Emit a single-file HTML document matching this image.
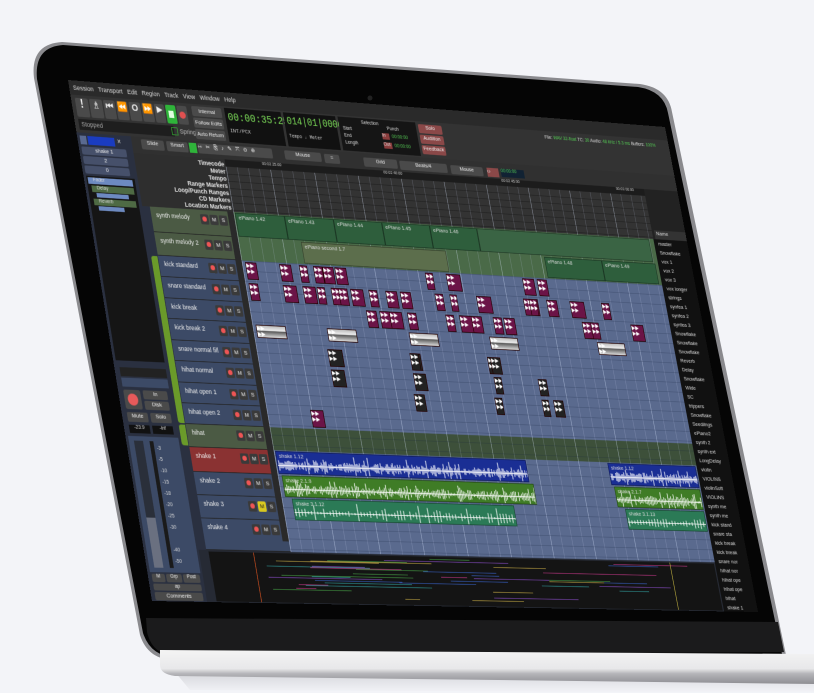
<!DOCTYPE html>
<html><head><meta charset="utf-8">
<style>
html,body{margin:0;padding:0;width:814px;height:693px;overflow:hidden;background:#f3f4f8;font-family:"Liberation Sans",sans-serif;}
#ui{position:absolute;left:0;top:0;width:1000px;height:700px;transform-origin:0 0;background:#2c2c2c;overflow:hidden;font-size:9px;color:#ddd;}
#ui div{position:absolute;box-sizing:border-box;}
.btn{background:#4a4a4a;border-radius:2px;color:#eee;text-align:center;}
.lbl{font-weight:bold;text-align:right;width:140px;left:88px;color:#e6e6e6;font-size:9px;}
.hd{left:97px;width:133px;border-bottom:1px solid #222;}
.nm{left:8px;top:6px;color:#eee;font-size:9px;white-space:nowrap;}
.reg{overflow:hidden;border:1px solid rgba(0,0,0,.4);}
.reg span{position:absolute;left:4px;top:1px;font-size:8px;color:#ddd;white-space:nowrap}
.hit{background:#6b1447;border:1px solid #200;color:#fff;font-size:8px;line-height:8px;overflow:hidden;}
.li{left:944px;width:56px;height:14px;background:#111;border-bottom:1px solid #333;font-size:8px;color:#ddd;padding-left:3px;white-space:nowrap;overflow:hidden;}
</style></head><body>
<svg width="814" height="693" style="position:absolute;left:0;top:0">
<defs>
<linearGradient id="base" x1="0" y1="0" x2="0" y2="1">
<stop offset="0" stop-color="#f4f4f4"/><stop offset="0.55" stop-color="#e8e8ea"/><stop offset="0.7" stop-color="#b4b4b8"/><stop offset="1" stop-color="#8e8e93"/></linearGradient>
<linearGradient id="sh" x1="0" y1="0" x2="0" y2="1"><stop offset="0" stop-color="#c8c9ce"/><stop offset="1" stop-color="#f3f4f8"/></linearGradient>
</defs>
<path d="M175 672 L814 680 L814 693 L190 690 Z" fill="url(#sh)" opacity="0.7"/>
<path d="M62 42 L640 84 Q668 88 672 112 L786 655 L175 660 Q148 660 140 635 L34 78 Q30 44 62 42 Z" fill="#8a8a8e"/>
<path d="M63 45 L638 87 Q664 91 668 113 L782 654 L176 657 Q151 657 143 633 L37 79 Q34 47 63 45 Z" fill="#050505"/>
<path d="M146 618 L778 622 L784 652 L176 656 Q152 655 147 632 Z" fill="#1b1b1c"/>
<circle cx="370" cy="98" r="2.5" fill="#222"/>
<path d="M160 650 L814 654 L814 684 L175 676 Q160 674 160 665 Z" fill="url(#base)"/>
</svg>

<div id="ui">
<div style="left:0;top:0;width:1000px;height:20px;background:#2a2a2a;padding:5px 0 0 6px;font-size:9px;color:#ddd;word-spacing:5px">Session Transport Edit Region Track View Window Help</div>
<div style="left:0;top:20px;width:1000px;height:52px;background:#333"></div>
<div class="btn" style="left:6px;top:24px;width:20px;height:26px;font-size:16px;font-weight:bold">!</div>
<div class="btn" style="left:28px;top:24px;width:20px;height:26px;font-size:14px">♗</div>
<div class="btn" style="left:50px;top:24px;width:18px;height:26px;font-size:13px;font-weight:bold">⏮</div>
<div class="btn" style="left:70px;top:24px;width:18px;height:26px;font-size:13px;font-weight:bold">⏪</div>
<div class="btn" style="left:90px;top:24px;width:18px;height:26px;font-size:13px;font-weight:bold">O</div>
<div class="btn" style="left:110px;top:24px;width:18px;height:26px;font-size:13px;font-weight:bold">⏩</div>
<div class="btn" style="left:130px;top:24px;width:16px;height:26px;font-size:12px">▶</div>
<div style="left:148px;top:24px;width:16px;height:26px;background:#2fb43a;border-radius:2px"><div style="left:4px;top:8px;width:8px;height:10px;background:#dfffe0"></div></div>
<div class="btn" style="left:166px;top:24px;width:16px;height:26px"><div style="left:3px;top:8px;width:10px;height:10px;border-radius:50%;background:#e05050"></div></div>
<div style="left:6px;top:53px;width:150px;height:15px;background:#1e1e1e;color:#aaa;padding:2px 4px">Stopped</div>
<div style="left:152px;top:55px;width:10px;height:11px;border:1px solid #3a3"></div>
<div style="left:165px;top:55px;width:40px;color:#bbb">Spring</div>
<div class="btn" style="left:190px;top:23px;width:48px;height:14px;font-size:8px;padding-top:2px">Internal</div>
<div class="btn" style="left:190px;top:39px;width:48px;height:14px;font-size:8px;padding-top:2px">Follow Edits</div>
<div class="btn" style="left:190px;top:55px;width:48px;height:14px;font-size:8px;padding-top:2px">Auto Return</div>
<div style="left:243px;top:22px;width:92px;height:48px;background:#111;color:#7ee05a;font-size:15px;padding:5px 4px;font-family:'Liberation Mono',monospace">00:00:35:25<div style="left:4px;top:28px;font-size:8px;color:#ccc">INT/PCX</div></div>
<div style="left:339px;top:22px;width:86px;height:48px;background:#111;color:#7ee05a;font-size:14px;padding:5px 4px;font-family:'Liberation Mono',monospace">014|01|0000<div style="left:4px;top:30px;font-size:7px;color:#ccc">Tempo ♩ Meter</div></div>
<div style="left:429px;top:22px;width:130px;height:48px;background:#151515;font-size:7px;color:#ddd">
<div style="left:38px;top:3px">Selection</div><div style="left:6px;top:13px">Start</div><div style="left:6px;top:23px">End</div><div style="left:6px;top:33px">Length</div>
<div style="left:80px;top:9px">Punch</div><div style="left:70px;top:19px;width:12px;height:9px;background:#8a3c3c">In</div><div style="left:70px;top:32px;width:14px;height:9px;background:#8a3c3c">Out</div>
<div style="left:86px;top:20px;color:#5c5">00:00:00</div><div style="left:88px;top:33px;color:#5c5">00:00:00</div></div>
<div class="btn" style="left:563px;top:24px;width:40px;height:13px;background:#8a4848;font-size:8px">Solo</div>
<div class="btn" style="left:563px;top:39px;width:40px;height:13px;background:#8a4848;font-size:8px">Audition</div>
<div class="btn" style="left:563px;top:54px;width:40px;height:13px;background:#8a4848;font-size:8px">Feedback</div>
<div style="left:780px;top:26px;width:220px;font-size:7px;color:#ddd;white-space:nowrap">File: <span style="color:#5c5">WAV 32-float</span> TC: <span style="color:#5c5">30</span> Audio: <span style="color:#5c5">48 kHz / 5.3 ms</span> Buffers: <span style="color:#5c5">100%</span></div>
<div style="left:85px;top:72px;width:915px;height:23px;background:#303030"></div>
<div class="btn" style="left:100px;top:75px;width:36px;height:14px;font-size:8px">Slide</div>
<div class="btn" style="left:140px;top:75px;width:34px;height:14px;font-size:8px">Smart</div>
<div style="left:176px;top:75px;width:12px;height:14px;background:#2fb43a"></div>
<div class="btn" style="left:190px;top:75px;width:120px;height:14px;font-size:8px;text-align:left;letter-spacing:6px">⇿✂⎘♪✎⤧⊖⊕</div>
<div class="btn" style="left:330px;top:76px;width:60px;height:13px;font-size:8px">Mouse</div>
<div class="btn" style="left:395px;top:77px;width:25px;height:13px;font-size:8px">=</div>
<div class="btn" style="left:460px;top:78px;width:56px;height:13px;font-size:8px">Grid</div>
<div class="btn" style="left:520px;top:79px;width:80px;height:13px;font-size:8px">Beats/4</div>
<div class="btn" style="left:606px;top:80px;width:55px;height:13px;font-size:8px">Mouse</div>
<div style="left:668px;top:80px;width:20px;height:13px;background:#8a4848;font-size:9px">‹›</div>
<div style="left:692px;top:80px;width:40px;height:12px;background:#123;color:#5c5;font-size:7px">00:00:00</div>
<div style="left:0;top:72px;width:85px;height:628px;background:#2a3040"></div>
<div style="left:4px;top:76px;width:10px;height:12px;background:#5a6a90"></div>
<div style="left:16px;top:76px;width:42px;height:12px;background:#1a3cc0"></div>
<div style="left:62px;top:76px;width:10px;height:12px;color:#ddd;font-size:10px">×</div>
<div class="btn" style="left:4px;top:91px;width:70px;height:11px;font-size:8px;background:#46506a">shake 1</div>
<div class="btn" style="left:4px;top:104px;width:70px;height:11px;font-size:8px;background:#46506a">2</div>
<div class="btn" style="left:4px;top:117px;width:70px;height:11px;font-size:8px;background:#46506a">0</div>
<div style="left:4px;top:131px;width:76px;height:250px;background:#151515"></div>
<div style="left:6px;top:133px;width:70px;height:9px;background:#6d8ac0;font-size:7px;padding-left:8px">Fader</div>
<div style="left:10px;top:144px;width:66px;height:9px;background:#4e6a44;font-size:7px;padding-left:8px">Delay</div>
<div style="left:16px;top:154px;width:50px;height:6px;background:#6d8ac0"></div>
<div style="left:10px;top:162px;width:66px;height:9px;background:#4e6a44;font-size:7px;padding-left:8px">Reverb</div>
<div style="left:16px;top:172px;width:40px;height:6px;background:#6d8ac0"></div>
<div style="left:8px;top:390px;width:72px;height:12px;background:#222"></div>
<div style="left:8px;top:404px;width:72px;height:12px;background:#3c4a66"></div>
<div style="left:8px;top:420px;width:26px;height:26px;background:#4a4a4a;border-radius:3px"><div style="left:5px;top:5px;width:16px;height:16px;border-radius:50%;background:#e85a5a"></div></div>
<div class="btn" style="left:38px;top:420px;width:38px;height:12px;font-size:8px">In</div>
<div class="btn" style="left:38px;top:434px;width:38px;height:12px;font-size:8px">Disk</div>
<div class="btn" style="left:8px;top:450px;width:32px;height:13px;font-size:8px">Mute</div>
<div class="btn" style="left:44px;top:450px;width:32px;height:13px;font-size:8px">Solo</div>
<div style="left:8px;top:467px;width:32px;height:11px;background:#111;font-size:7px;text-align:center">-23.9</div>
<div style="left:44px;top:467px;width:32px;height:11px;background:#111;font-size:7px;text-align:center">-inf</div>
<div style="left:4px;top:482px;width:78px;height:180px;background:#3c4a66"></div>
<div style="left:12px;top:488px;width:14px;height:168px;background:#2a2f3a"></div>
<div style="left:12px;top:590px;width:14px;height:66px;background:#6a7080"></div>
<div style="left:36px;top:488px;width:6px;height:168px;background:#1a1a1a"></div>
<div style="left:46px;top:490px;width:28px;height:165px;font-size:7px;line-height:15px;color:#ddd">-3<br>-5<br>-10<br>-15<br>-18<br>-20<br>-25<br>-30<br><br>-40<br>-50</div>
<div class="btn" style="left:6px;top:664px;width:20px;height:11px;font-size:7px">M</div>
<div class="btn" style="left:28px;top:664px;width:24px;height:11px;font-size:7px">Grp</div>
<div class="btn" style="left:54px;top:664px;width:26px;height:11px;font-size:7px">Post</div>
<div class="btn" style="left:6px;top:677px;width:74px;height:9px;font-size:7px">ap</div>
<div class="btn" style="left:6px;top:688px;width:74px;height:11px;font-size:8px">Comments</div>
<div style="left:85px;top:95px;width:145px;height:73px;background:#2e2e2e"></div>
<div class="lbl" style="top:97px">Timecode</div>
<div class="lbl" style="top:107px">Meter</div>
<div class="lbl" style="top:117px">Tempo</div>
<div class="lbl" style="top:127px">Range Markers</div>
<div class="lbl" style="top:137px">Loop/Punch Ranges</div>
<div class="lbl" style="top:147px">CD Markers</div>
<div class="lbl" style="top:157px">Location Markers</div>
<div style="left:230px;top:95px;width:710px;height:73px;background:#333"></div>
<div style="left:230px;top:95px;width:710px;height:10px;background:#1c1c1c;font-size:6px;color:#ccc"><span style="position:absolute;left:60px">00:02 25:00</span><span style="position:absolute;left:260px">00:02 40:00</span><span style="position:absolute;left:460px">00:02 45:00</span><span style="position:absolute;left:660px">00:03 00:00</span></div>
<div style="left:940px;top:95px;width:60px;height:73px;background:#222"></div>
<div class="li" style="top:155px;background:#333">Name</div>
<div class="hd" style="top:168px;height:35px;background:#4b5a44"><div class="nm">synth melody</div></div>
<div class="hd" style="top:203px;height:32px;background:#4b5a44"><div class="nm">synth melody 2</div></div>
<div class="hd" style="top:235px;height:29px;background:#3c4a66"><div class="nm">kick standard</div></div>
<div class="hd" style="top:264px;height:29px;background:#3c4a66"><div class="nm">snare standard</div></div>
<div class="hd" style="top:293px;height:28px;background:#3c4a66"><div class="nm">kick break</div></div>
<div class="hd" style="top:321px;height:29px;background:#3c4a66"><div class="nm">kick break 2</div></div>
<div class="hd" style="top:350px;height:28px;background:#3c4a66"><div class="nm">snare normal fill</div></div>
<div class="hd" style="top:378px;height:29px;background:#3c4a66"><div class="nm">hihat normal</div></div>
<div class="hd" style="top:407px;height:28px;background:#3c4a66"><div class="nm">hihat open 1</div></div>
<div class="hd" style="top:435px;height:28px;background:#3c4a66"><div class="nm">hihat open 2</div></div>
<div class="hd" style="top:463px;height:31px;background:#4b5a44"><div class="nm">hihat</div></div>
<div class="hd" style="top:494px;height:33px;background:#8a3232"><div class="nm">shake 1</div></div>
<div class="hd" style="top:527px;height:31px;background:#3c4a66"><div class="nm">shake 2</div></div>
<div class="hd" style="top:558px;height:31px;background:#3c4a66"><div class="nm">shake 3</div></div>
<div class="hd" style="top:589px;height:42px;background:#3c4a66"><div class="nm">shake 4</div></div>
<div style="left:85px;top:168px;width:12px;height:463px;background:#2a3040"></div>
<div style="left:86px;top:236px;width:10px;height:226px;background:#6a9a2a;border-radius:4px 0 0 4px"></div>
<div style="left:86px;top:464px;width:10px;height:28px;background:#6a9a2a;border-radius:4px 0 0 4px"></div>
<div style="left:230px;top:168px;width:710px;height:67px;background:#4a6a48"></div>
<div style="left:230px;top:235px;width:710px;height:228px;background:#5a6a8e"></div>
<div style="left:230px;top:463px;width:710px;height:31px;background:#3d503a"></div>
<div style="left:230px;top:494px;width:710px;height:137px;background:#5a6a8e"></div>
<div id="tl" style="left:230px;top:95px;width:710px;height:536px"></div>
<div style="left:940px;top:168px;width:60px;height:532px;background:#111"></div>
<div id="list"></div>
<div style="left:85px;top:631px;width:855px;height:69px;background:#262a34"></div>
<div style="left:100px;top:633px;width:838px;height:66px;background:#141414"></div>
<div id="sum"></div>
<div style="left:170px;top:633px;width:1px;height:66px;background:#d05020"></div>
<div style="left:860px;top:633px;width:1px;height:66px;background:#c0b040"></div>
</div>

<script>
var ui=document.getElementById('ui');
function H(s){ui.insertAdjacentHTML('beforeend',s);}
var seed=7;function rnd(){seed=(seed*9301+49297)%233280;return seed/233280;}
var rows=[[168,35],[203,32],[235,29],[264,29],[293,28],[321,29],[350,28],[378,29],[407,28],[435,28],[463,31],[494,33],[527,31],[558,31],[589,28]];
rows.forEach(function(r,i){var x=175,y=r[0]+6;
H('<div style="left:'+x+'px;top:'+y+'px;width:13px;height:14px;background:#3a3a3a;border-radius:2px"><div style="left:3px;top:3px;width:7px;height:7px;border-radius:50%;background:#e55"></div></div>');
H('<div class="btn" style="left:'+(x+15)+'px;top:'+y+'px;width:13px;height:14px;font-size:8px;line-height:14px;background:'+(i==13?'#d8c820;color:#222':'#3a3a3a')+'">M</div>');
H('<div class="btn" style="left:'+(x+30)+'px;top:'+y+'px;width:13px;height:14px;font-size:8px;line-height:14px;background:#3a3a3a">S</div>');
H('<div style="left:220px;top:'+r[0]+'px;width:10px;height:'+r[1]+'px;background:#2a2a2a"></div>');});
var sm=['ePiano 1.42','ePiano 1.43','ePiano 1.44','ePiano 1.45','ePiano 1.46'];
for(var i=0;i<5;i++){H('<div class="reg" style="left:'+(232+i*80)+'px;top:169px;width:80px;height:33px;background:#2e5e3c"><span>'+sm[i]+'</span></div>');}
H('<div class="reg" style="left:632px;top:169px;width:300px;height:33px;background:#3a6444"></div>');
H('<div class="reg" style="left:332px;top:204px;width:240px;height:30px;background:#5c6e4c"><span>ePiano second 1.7</span></div>');
H('<div class="reg" style="left:740px;top:204px;width:100px;height:30px;background:#2e5e3c"><span>ePiano 1.48</span></div>');
H('<div class="reg" style="left:840px;top:204px;width:95px;height:30px;background:#2e5e3c"><span>ePiano 1.49</span></div>');
var tl='';for(var x=0;x<710;x+=18){tl+='<div style="left:'+x+'px;top:10px;width:1px;height:526px;background:'+(x%72==0?'rgba(220,230,255,.45)':'rgba(200,210,240,.22)')+'"></div>';}
for(var y=140;y<536;y+=14){tl+='<div style="left:0;top:'+y+'px;width:710px;height:1px;background:rgba(20,30,60,.25)"></div>';}
for(var y=20;y<73;y+=10){tl+='<div style="left:0;top:'+y+'px;width:710px;height:1px;background:rgba(0,0,0,.3)"></div>';}
document.getElementById('tl').innerHTML=tl;
var dr=[[235,[5,60,92,115,130,150,300,335,465,490]],[264,[5,60,92,115,138,150,170,200,228,252,310,335,380,460,470,500,540,595]],[293,[190,212,228,258,322,345,365,402,420,555,570,640]],[321,[5,120,255,390,575]],[350,[115,250,250,380,385]],[378,[115,250,385,460]],[407,[245,380,460,480]],[435,[70]]];
dr.forEach(function(d){d[1].forEach(function(x){var w=12+Math.floor(rnd()*14);if(d[0]==321)w=48;
H('<div class="hit" style="left:'+(230+x)+'px;top:'+(d[0]+2)+'px;width:'+w+'px;height:'+(d[0]==321?18:24)+'px;'+(d[0]==321?'background:linear-gradient(#bbb,#eee 40%,#555 45%,#ddd);':'')+(d[0]>=350&&d[0]<435?'background:#222;':'')+'">▶▶<br>▶▶</div>');});});
function wave(l,t,w,h,bg,label,dense){var s='<svg width="'+w+'" height="'+h+'" style="position:absolute;left:0;top:0"><path d="';
for(var x=2;x<w;x+=dense){var a=(rnd()<0.2?0.45:0.2)*h*rnd()+1;s+='M'+x+' '+(h/2+3-a)+'V'+(h/2+3+a);}
s+='M0 '+(h/2+3)+'H'+w+'" stroke="#fff" stroke-width="1.2"/></svg>';
H('<div class="reg" style="left:'+l+'px;top:'+t+'px;width:'+w+'px;height:'+h+'px;background:'+bg+'">'+s+'<span>'+label+'</span></div>');}
wave(232,495,412,31,'#1a2e94','shake 1.12',2);wave(784,495,154,31,'#1a2e94','shake 1.12',2);
wave(236,528,414,29,'#3f7c26','shake 2.1.9',2.5);wave(788,528,150,29,'#3f7c26','shake 2.1.7',2.5);
wave(246,559,364,29,'#2b7a56','shake 3.1.12',5);wave(800,559,138,29,'#2b7a56','shake 3.1.13',5);
var ln=['master','Snowflake','vox 1','vox 2','vox 3','vox longer','strings','synfea 1','synfea 2','synfea 3','Snowflake','Snowflake','Snowflake','Reverb','Delay','Snowflake','Wide','SC','trippers','Snowflake','Seedlings','ePiano2','synth 2','synth ext','LongDelay','violin','VIOLINS','violinSoft','VIOLINS','synth me','synth me','kick stand','snare sta','kick break','kick break','snare nor','hihat nor','hihat ope','hihat ope','hihat','shake 1'];
var l='';ln.forEach(function(n,i){l+='<div class="li" style="top:'+(170+i*13)+'px">'+n+'</div>';});document.getElementById('list').innerHTML=l;
var sm2='',cols=['#a03070','#3050a0','#3a803a','#a08a3a','#7040a0','#2a8080'];
for(var i=0;i<40;i++){var x=170+rnd()*600,w=20+rnd()*200,y=636+rnd()*55;sm2+='<div style="left:'+x+'px;top:'+y+'px;width:'+w+'px;height:1px;background:'+cols[i%6]+'"></div>';}
document.getElementById('sum').innerHTML=sm2;
function fit(el,w,h,p){var x0=p[0],y0=p[1],x1=p[2],y1=p[3],x2=p[4],y2=p[5],x3=p[6],y3=p[7];
var dx1=x1-x2,dx2=x3-x2,dy1=y1-y2,dy2=y3-y2,sx=x0-x1+x2-x3,sy=y0-y1+y2-y3,den=dx1*dy2-dx2*dy1;
var g=(sx*dy2-dx2*sy)/den,hh=(dx1*sy-sx*dy1)/den;
var a=x1-x0+g*x1,b=x3-x0+hh*x3,c=x0,d=y1-y0+g*y1,e=y3-y0+hh*y3,f=y0;
var m=[a/w,d/w,0,g/w,b/h,e/h,0,hh/h,0,0,1,0,c,f,0,1];
el.style.transform='matrix3d('+m.join(',')+')';}
fit(ui,1000,700,[68,80,665,127,758,612,152,601]);
</script>
</body></html>
